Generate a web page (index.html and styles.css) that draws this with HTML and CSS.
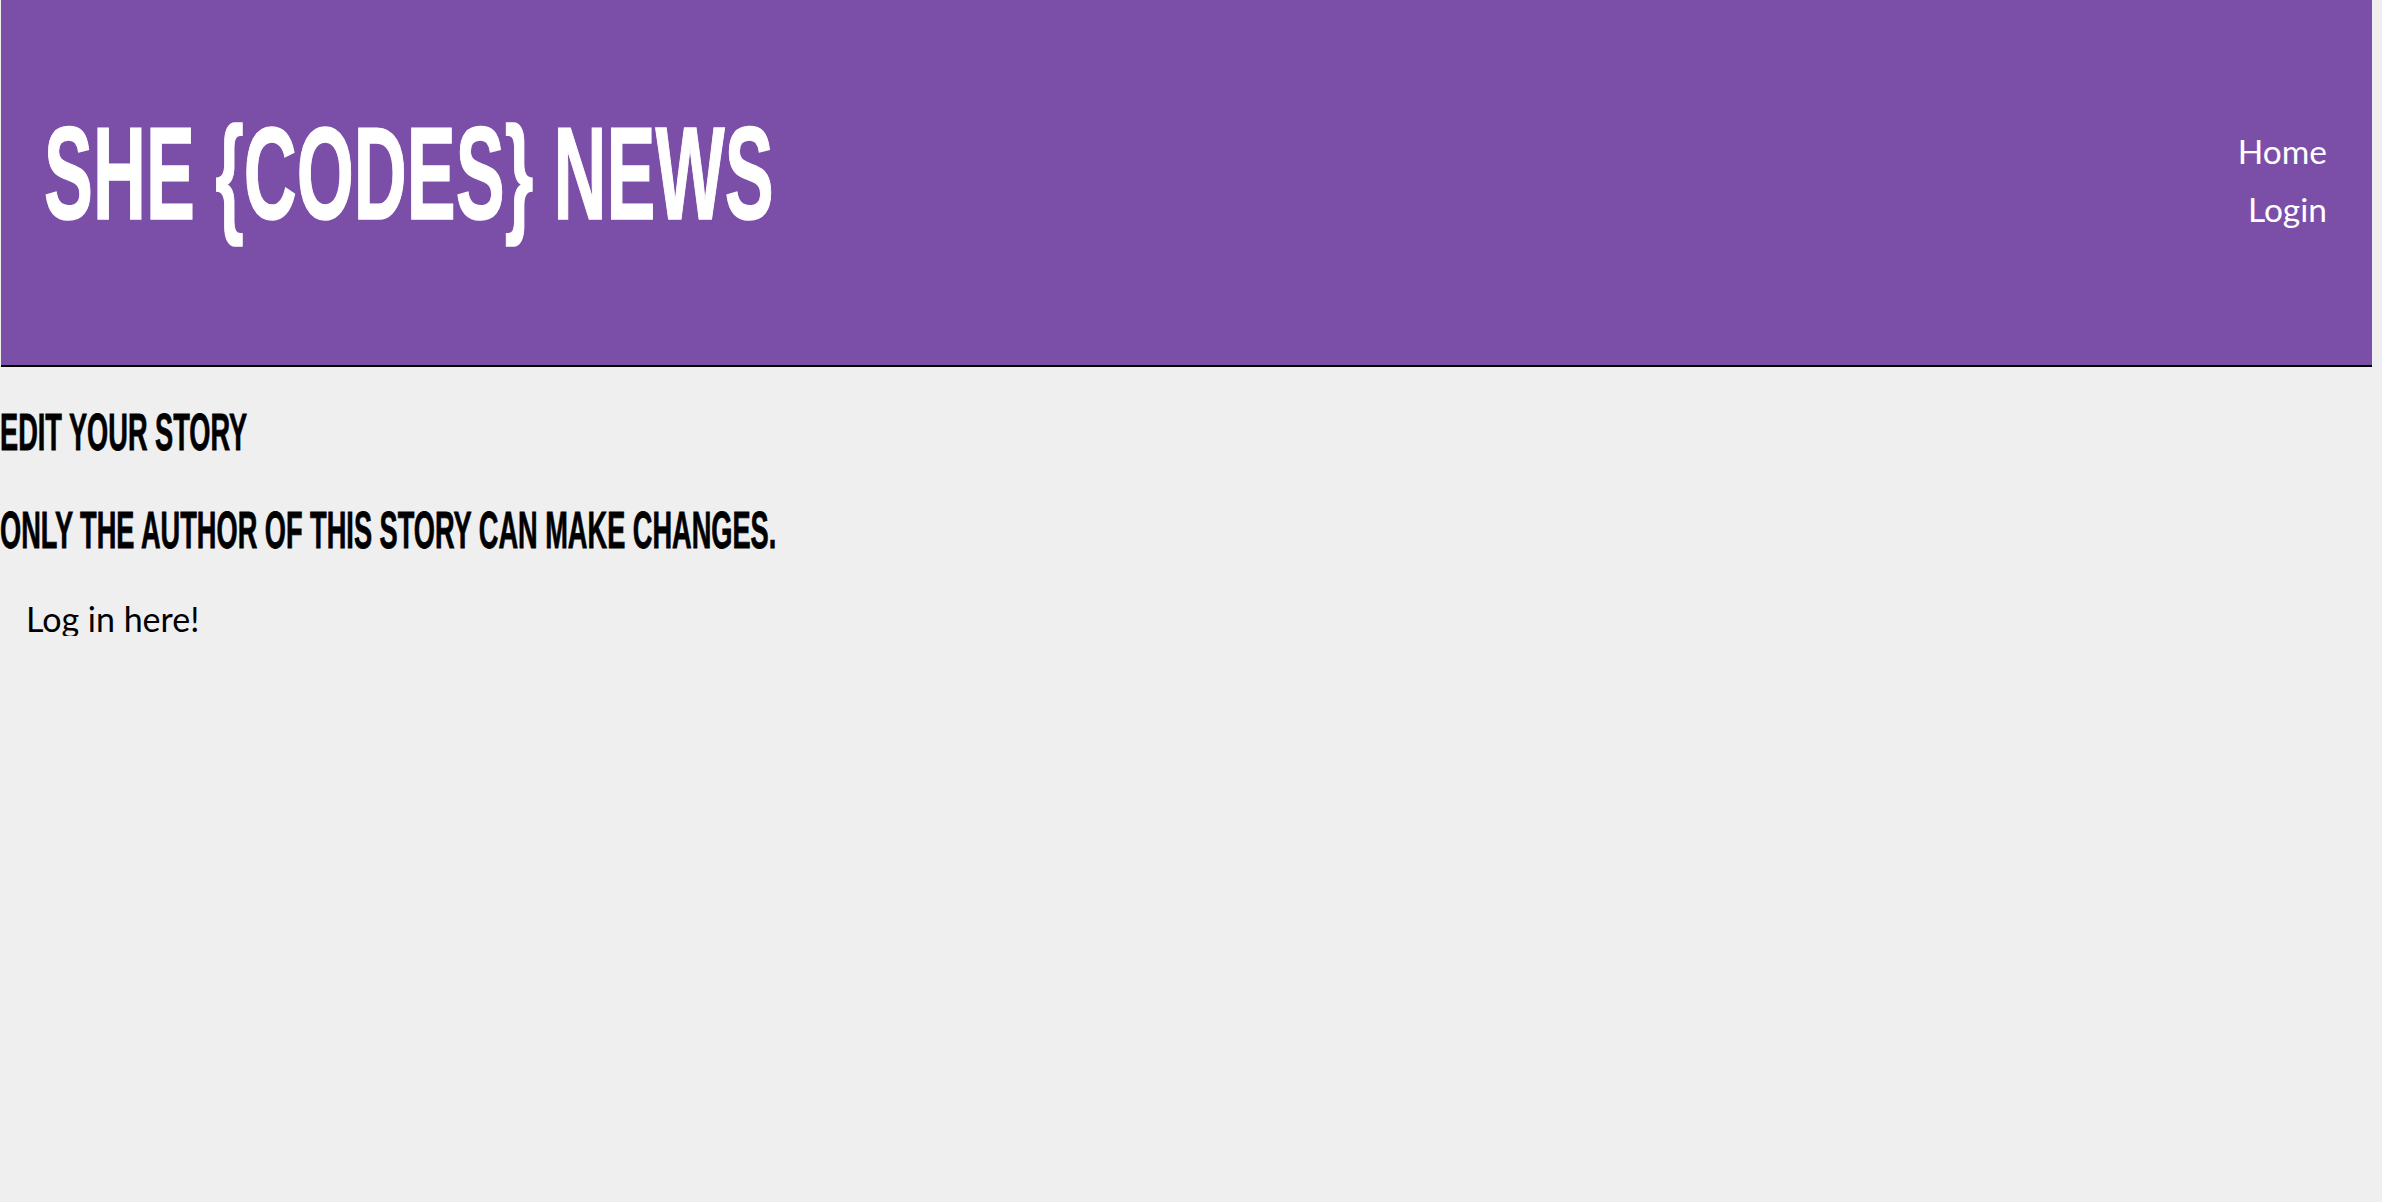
FILE: index.html
```html
<!DOCTYPE html>
<html lang="en">
<head>
<meta charset="utf-8">
<title>She Codes News</title>
<link rel="stylesheet" href="styles.css">
</head>
<body>
<header class="site-header">
  <h1 class="brand"><span class="condensed brand-text">SHE {CODES} NEWS</span></h1>
  <nav class="nav">
    <a class="nav-link" href="#">Home</a>
    <a class="nav-link" href="#">Login</a>
  </nav>
</header>
<main class="content">
  <h2 class="heading heading-first"><span class="condensed heading-text">EDIT YOUR STORY</span></h2>
  <h2 class="heading heading-second"><span class="condensed heading-text">ONLY THE AUTHOR OF THIS STORY CAN MAKE CHANGES.</span></h2>
  <p class="login-note"><a class="login-link" href="#">Log in here!</a></p>
</main>
</body>
</html>
```

FILE: styles.css
```css
html, body {
  margin: 0;
  padding: 0;
}

body {
  background: #efefef;
  color: #000;
  font-family: "Lato", "Liberation Sans", sans-serif;
}

.site-header {
  display: flex;
  justify-content: space-between;
  align-items: flex-start;
  height: 365px;
  margin: 0 10px 0 1px;
  padding: 0 45px 0 43px;
  background: #7b4ea8;
  border-bottom: 2px solid #000;
}

.brand {
  margin: 108px 0 0 0;
  font-family: "Liberation Sans", Arial, sans-serif;
  font-weight: 700;
  font-size: 131px;
  line-height: 1;
  color: #fff;
  white-space: nowrap;
}

.condensed {
  display: inline-block;
  transform-origin: left center;
  white-space: nowrap;
}

.brand-text {
  transform: scaleX(0.56);
  -webkit-text-stroke: 1.5px #fff;
}

.nav {
  display: flex;
  flex-direction: column;
  align-items: flex-end;
  margin-top: 122px;
}

.nav-link {
  font-family: "Lato", sans-serif;
  font-size: 33.5px;
  line-height: 58px;
  color: #fff;
  text-decoration: none;
}

.content {
  padding: 0;
}

.heading {
  margin: 0;
  font-family: "Liberation Sans", Arial, sans-serif;
  font-weight: 700;
  font-size: 51px;
  line-height: 1;
  white-space: nowrap;
}

.heading-text {
  transform: scaleX(0.533);
  -webkit-text-stroke: 0.8px #000;
}

.heading-first {
  margin-top: 40px;
}

.heading-second {
  margin-top: 47px;
}

.login-note {
  margin: 46px 0 0 0;
  padding-left: 26px;
  font-size: 34px;
  line-height: 1;
}

.login-link {
  color: #000;
  text-decoration: none;
}
```
